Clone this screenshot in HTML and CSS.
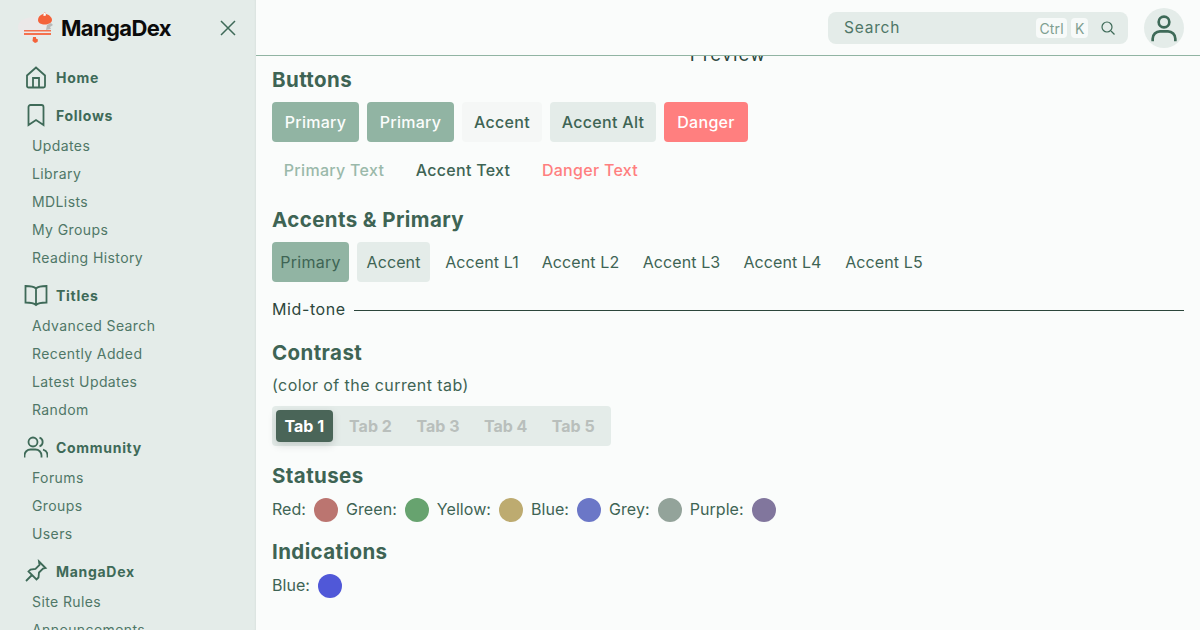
FILE: index.html
```html
<!DOCTYPE html>
<html lang="en">
<head>
<meta charset="utf-8">
<title>MangaDex</title>
<link rel="stylesheet" href="styles.css">
</head>
<body>
<div class="app">
  <aside class="sidebar">
    <div class="brand">
      <svg class="logo" viewBox="0 0 36 36" width="36" height="36">
        <path d="M0 17C0 12 5 8 13 7.500c5-.5 9-.5 11 .5l6 6 2 6c0 5-6 8-14 8C7 28 0 24 0 17z" fill="#ebe9e9"/>
        <path d="M20 10c0-3 2-5 5-6l2-2 1 2c4 1 6 4 6 6 0 3-4 4.500-7 4.500-4 0-7-1.500-7-4.500z" fill="#f4623a"/>
        <path d="M25.500 3l2-.5.5 3-2.500.5z" fill="#fff"/>
        <path d="M29 15l4-2 2 2-3 2 1 2-5 1z" fill="#b9b9b9"/>
        <path d="M6 20h27v1.500H6zM6 23h27v2H6z" fill="#f4714e"/>
        <path d="M15 27h3v1.500l2 1-.5 2.500-2.500 1-2.500-2z" fill="#f4623a"/>
      </svg>
      <span class="wordmark">MangaDex</span>
      <svg class="close" viewBox="0 0 16 16" width="16" height="16"><path d="M1 1l14 14M15 1L1 15"/></svg>
    </div>
    <nav class="nav">
      <a class="nav-head nav-first"><svg class="ico" viewBox="0 0 24 24"><path d="M3 10.500 12 2.500l9 8V21a1.500 1.500 0 0 1-1.500 1.500h-15A1.500 1.500 0 0 1 3 21z"/><path d="M9 22.500V13h6v9.500"/></svg>Home</a>
      <div class="group">
        <a class="nav-head"><svg class="ico" viewBox="0 0 24 24"><path d="M19.500 22 12 17l-7.500 5V4a2 2 0 0 1 2-2h11a2 2 0 0 1 2 2z"/></svg>Follows</a>
        <a class="nav-item">Updates</a><a class="nav-item">Library</a><a class="nav-item">MDLists</a><a class="nav-item">My Groups</a><a class="nav-item">Reading History</a>
      </div>
      <div class="group">
        <a class="nav-head"><svg class="ico" viewBox="0 0 24 24"><path d="M12 5.500C10 3.500 8 3 1.500 3v16.500c6.500 0 8.500.5 10.500 2.500 2-2 4-2.500 10.500-2.500V3C16 3 14 3.500 12 5.500zM12 5.500V22"/></svg>Titles</a>
        <a class="nav-item">Advanced Search</a><a class="nav-item">Recently Added</a><a class="nav-item">Latest Updates</a><a class="nav-item">Random</a>
      </div>
      <div class="group">
        <a class="nav-head"><svg class="ico" viewBox="0 0 24 24"><circle cx="9" cy="7" r="4.500"/><path d="M.5 22.500v-2a6 6 0 0 1 6-6h5a6 6 0 0 1 6 6v2M15.500 2.700a4.500 4.500 0 0 1 0 8.600M19 14.700a6 6 0 0 1 4.500 5.800v2"/></svg>Community</a>
        <a class="nav-item">Forums</a><a class="nav-item">Groups</a><a class="nav-item">Users</a>
      </div>
      <div class="group">
        <a class="nav-head"><svg class="ico" viewBox="0 0 24 24"><path d="M15 2.500 21.500 9l-2.500.5-4 4-.5 5-2 2-8-8 2-2 5-.5 4-4zM8 16l-6 6"/></svg>MangaDex</a>
        <a class="nav-item">Site Rules</a><a class="nav-item">Announcements</a>
      </div>
    </nav>
  </aside>
  <div class="page">
    <header class="topbar">
      <div class="search">
        <span class="search-label">Search</span>
        <kbd class="key">Ctrl</kbd><kbd class="key">K</kbd>
        <svg class="search-ico" viewBox="0 0 16 16" width="16" height="16"><circle cx="7" cy="7" r="5"/><path d="M11 11l3.500 3.500"/></svg>
      </div>
      <div class="avatar"><svg viewBox="0 0 24 24" width="32" height="32"><circle cx="12" cy="7.500" r="4"/><path d="M3.500 22v-2a5.500 5.500 0 0 1 5.500-5.500h6a5.500 5.500 0 0 1 5.500 5.500v2"/></svg></div>
    </header>
    <main class="content">
      <div class="preview-title">Preview</div>
      <h2 class="h-buttons">Buttons</h2>
      <div class="row">
        <button class="btn w-primary primary">Primary</button>
        <button class="btn w-primary primary">Primary</button>
        <button class="btn accent w-accent">Accent</button>
        <button class="btn accent-alt w-alt">Accent Alt</button>
        <button class="btn danger w-danger">Danger</button>
      </div>
      <div class="row">
        <button class="btn text-primary w-tp">Primary Text</button>
        <button class="btn text-accent w-ta">Accent Text</button>
        <button class="btn text-danger w-td">Danger Text</button>
      </div>
      <h2 class="h-accents">Accents &amp; Primary</h2>
      <div class="row swatches">
        <div class="sw sw-primary">Primary</div>
        <div class="sw sw-accent">Accent</div>
        <div class="sw w-l1">Accent L1</div>
        <div class="sw w-l2">Accent L2</div>
        <div class="sw w-l3">Accent L3</div>
        <div class="sw w-l4">Accent L4</div>
        <div class="sw w-l5">Accent L5</div>
      </div>
      <div class="midtone"><span>Mid-tone</span><i class="rule"></i></div>
      <h2 class="h-contrast">Contrast</h2>
      <p class="note">(color of the current tab)</p>
      <div class="tabs">
        <span class="tab active">Tab 1</span>
        <span class="tab">Tab 2</span>
        <span class="tab">Tab 3</span>
        <span class="tab">Tab 4</span>
        <span class="tab">Tab 5</span>
      </div>
      <h2 class="h-status">Statuses</h2>
      <div class="dots">
        <span>Red:</span><i class="dot red"></i>
        <span>Green:</span><i class="dot green"></i>
        <span>Yellow:</span><i class="dot yellow"></i>
        <span>Blue:</span><i class="dot blue"></i>
        <span>Grey:</span><i class="dot grey"></i>
        <span>Purple:</span><i class="dot purple"></i>
      </div>
      <h2 class="h-ind">Indications</h2>
      <div class="dots">
        <span>Blue:</span><i class="dot indigo"></i>
      </div>
    </main>
  </div>
</div>
</body>
</html>
```

FILE: styles.css
```css
* { box-sizing: border-box; }
html, body { margin: 0; height: 100%; }
body {
  font-family: "Inter", "Liberation Sans", sans-serif;
  font-size: 16px;
  color: #3e6454;
  background: #fafcfb;
  overflow: hidden;
}
.app { display: flex; height: 630px; width: 1200px; overflow: hidden; }

/* sidebar */
.sidebar {
  width: 256px;
  flex: none;
  height: 630px;
  overflow: hidden;
  background: #e4ece9;
  box-shadow: inset -2px 0 2px -1px rgba(0,0,0,.04);
  padding: 0 16px;
}
.brand { display: flex; align-items: center; height: 56px; padding-left: 2px; }
.logo { flex: none; margin-right: 7px; }
.wordmark { font-size: 22px; font-weight: 700; letter-spacing: -.65px; color: #0b0b0b; width: 110px; }
.close { margin-left: 49px; flex: none; fill: none; stroke: #3e6a58; stroke-width: 1.5; }
.nav { display: flex; flex-direction: column; }
.group { display: flex; flex-direction: column; }
.nav-head {
  display: flex; align-items: center; height: 28px;
  font-size: 14px; font-weight: 700; color: #3e6a58; letter-spacing: .7px;
  padding-left: 8px; gap: 8px; margin-bottom: 2px;
}
.nav-first { margin-top: 7px; margin-bottom: 10px; }
.group + .group { margin-top: 10px; }
.ico { width: 24px; height: 24px; flex: none; fill: none; stroke: #3e6a58; stroke-width: 1.800; }
.nav-item { display: flex; align-items: center; height: 28px; font-size: 14px; color: #4f7767; padding-left: 16px; white-space: nowrap; letter-spacing: .4px; }

/* right side */
.page { flex: 1; min-width: 0; display: flex; flex-direction: column; height: 630px; overflow: hidden; }
.topbar {
  height: 56px; flex: none; position: relative; z-index: 2;
  display: flex; align-items: center; justify-content: flex-end; gap: 16px;
  padding: 1px 16px 0; background: #fafcfb; border-bottom: 1px solid #91b4a3;
}
.search {
  width: 300px; height: 32px; border-radius: 8px; background: #e4ece9;
  display: flex; align-items: center; padding: 0 12px 0 16px; gap: 4px; color: #4f7767;
}
.search-label { flex: 1; font-size: 15.500px; letter-spacing: .8px; padding-bottom: 1px; }
.key {
  font-family: inherit; font-size: 14px; height: 20px; padding: 0 3.500px; border-radius: 4px;
  background: #f7faf9; color: #7f9f91; display: flex; align-items: center; letter-spacing: .2px;
}
.search-ico { margin-left: 8px; fill: none; stroke: #3e6a58; stroke-width: 1.200; }
.avatar {
  width: 40px; height: 40px; border-radius: 50%; background: #e4ece9;
  display: flex; align-items: center; justify-content: center;
}
.avatar svg { fill: none; stroke: #3e6a58; stroke-width: 2; }

.content { padding: 0 16px; flex: 1; }
.preview-title { margin-top: -14px; height: 24px; line-height: 24px; text-align: center; font-size: 18.500px; color: #2c463b; letter-spacing: 1px; }
h2 { margin: 0; font-size: 20.500px; line-height: 28px; font-weight: 700; color: #3e6454; letter-spacing: .4px; }
.h-accents { margin-top: 16px; }
.h-contrast { margin-top: 18px; }
.h-status { margin-top: 16px; }
.h-ind { margin-top: 16px; }
.row { display: flex; gap: 8px; margin-top: 8px; }
.btn {
  height: 40px; border: 0; border-radius: 4px; padding: 0 0 1px; font: inherit; font-weight: 500; letter-spacing: .3px; text-align: center;
}
.primary { background: #91b4a3; color: #fbfdfc; }
.accent { background: #f5f7f6; color: #3e6454; }
.accent-alt { background: #e4ece9; color: #3e6454; }
.danger { background: #ff7f7f; color: #fff; }
.text-primary { background: none; color: #9ab9aa; }
.text-accent { background: none; color: #3e6454; }
.text-danger { background: none; color: #ff7f7f; }
.w-primary { width: 87px; }
.w-accent { width: 80px; }
.w-alt { width: 106px; }
.w-danger { width: 84px; }
.w-tp { width: 124px; }
.w-ta { width: 118px; }
.w-td { width: 120px; }

.swatches { gap: 8px; margin-top: 8px; }
.sw { height: 40px; border-radius: 4px; display: flex; align-items: center; justify-content: center; padding-bottom: 1px; color: #3e6454; letter-spacing: .1px; }
.sw-primary { width: 77px; background: #91b4a3; letter-spacing: .25px; }
.sw-accent { width: 73px; background: #e4ece9; }
.w-l1 { width: 88px; }
.w-l2 { width: 93px; }
.w-l3 { width: 93px; }
.w-l4 { width: 93px; }
.w-l5 { width: 94px; }

.midtone { display: flex; align-items: center; gap: 8px; height: 24px; margin-top: 15px; color: #2c463b; letter-spacing: .6px; }
.rule { flex: 1; height: 1px; background: #2c463b; margin-top: 2px; }
.note { line-height: 24px; color: #3e6454; letter-spacing: .42px; height: 24px; margin: 6px 0 0; }
.tabs { display: flex; width: 339px; height: 40px; margin-top: 9px; padding: 4px; background: #e4ece9; border-radius: 4px; align-items: center; }
.tab { font-size: 16px; font-weight: 700; color: #b9bfbc; width: 68px; height: 32px; display: flex; align-items: center; justify-content: center; border-radius: 4px; padding-bottom: 1px; }
.tab.active { width: 57px; margin-right: 4px; background: #4a6558; color: #fff; box-shadow: 0 3px 8px rgba(0,0,0,.15); }
.dots { display: flex; align-items: center; gap: 8px; height: 24px; margin-top: 8px; letter-spacing: .06px; }
.dots span { padding-bottom: 2px; }
.dot { width: 24px; height: 24px; border-radius: 50%; flex: none; }
.red { background: #bb7570; }
.green { background: #67a36f; }
.yellow { background: #bdab70; }
.blue { background: #6b77c7; }
.grey { background: #93a39a; }
.purple { background: #81769d; }
.indigo { background: #5058d8; }
```
